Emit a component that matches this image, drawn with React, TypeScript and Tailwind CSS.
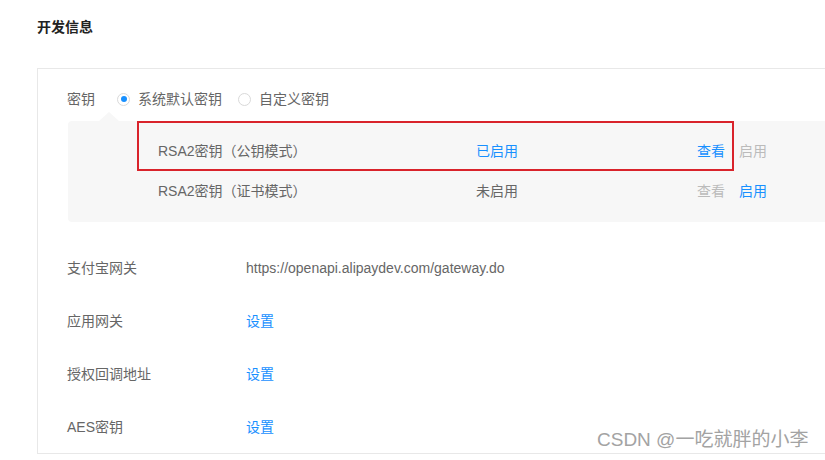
import React from "react";

const font = { fontFamily: '"Liberation Sans", "Noto Sans CJK SC", sans-serif' };

function Radio({ checked, label }: { checked?: boolean; label: string }) {
  return (
    <label className="flex items-center">
      <span className="w-[13px] h-[13px] rounded-full border border-[#d9d9d9] bg-white flex items-center justify-center">
        {checked && <span className="w-[6px] h-[6px] rounded-full bg-[#1890ff]" />}
      </span>
      <span className="ml-[8px] text-[#666]">{label}</span>
    </label>
  );
}

function KeyRow({ name, status, on }: { name: string; status: string; on: boolean }) {
  return (
    <div className="flex items-center h-[40px]">
      <div className="w-[408px] pl-[90px] shrink-0">{name}</div>
      <div className={`w-[221px] shrink-0 ${on ? "text-[#1890ff]" : "text-[#666]"}`}>{status}</div>
      <div className={`w-[42px] shrink-0 ${on ? "text-[#1890ff]" : "text-[#bbb]"}`}>查看</div>
      <div className={on ? "text-[#bbb]" : "text-[#1890ff]"}>启用</div>
    </div>
  );
}

export default function App() {
  const settings = [
    { label: "支付宝网关", value: "https://openapi.alipaydev.com/gateway.do", link: false },
    { label: "应用网关", value: "设置", link: true },
    { label: "授权回调地址", value: "设置", link: true },
    { label: "AES密钥", value: "设置", link: true },
  ];

  return (
    <div className="relative w-[825px] h-[460px] overflow-hidden bg-white text-[14px] text-[#666]" style={font}>
      <div className="pl-[37px] pt-[18px]">
        <h2 className="text-[14px] leading-[18px] font-bold text-[#222]">开发信息</h2>

        <div className="mt-[32px] w-[850px] border border-[#e8e8e8] pt-[20px] pb-[16px]">
          <div className="flex items-center h-[20px] pl-[29px]">
            <span className="w-[50px]">密钥</span>
            <div className="flex items-center gap-[16px]">
              <Radio checked label="系统默认密钥" />
              <Radio label="自定义密钥" />
            </div>
          </div>

          <div className="relative ml-[30px] mt-[12px] rounded-[4px] bg-[#f7f7f7] pt-[10px] pb-[11px]">
            <div className="absolute -top-[9px] left-[31px] w-0 h-0 border-l-[10px] border-r-[10px] border-b-[9px] border-l-transparent border-r-transparent border-b-[#f7f7f7]" />
            <div className="absolute top-0 left-[69px] w-[597px] h-[50px] border-2 border-[#d9232b]" />
            <KeyRow name="RSA2密钥（公钥模式）" status="已启用" on />
            <KeyRow name="RSA2密钥（证书模式）" status="未启用" on={false} />
          </div>

          <div className="mt-[36px] flex flex-col gap-[33px] pl-[29px]">
            {settings.map((s) => (
              <div key={s.label} className="flex items-center h-[20px]">
                <span className="w-[179px] shrink-0">{s.label}</span>
                <span className={s.link ? "text-[#1890ff]" : "text-[#666]"}>{s.value}</span>
              </div>
            ))}
          </div>
        </div>
      </div>

      <div className="absolute left-[597px] top-[429px] text-[19px] leading-[22px] text-[#a3a3a3]">
        CSDN @一吃就胖的小李
      </div>
    </div>
  );
}
